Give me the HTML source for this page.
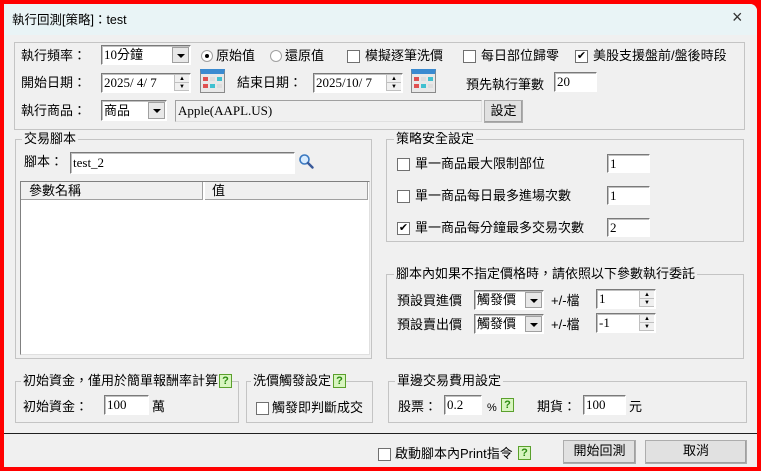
<!DOCTYPE html>
<html><head><meta charset="utf-8"><style>
*{box-sizing:border-box;margin:0;padding:0}
body{width:761px;height:471px;background:#ff0000;position:relative;overflow:hidden;font-family:"Liberation Sans","Noto Sans CJK TC",sans-serif;font-size:13px;color:#000}
.win{position:absolute;left:4px;top:4px;width:753px;height:463px;background:#f0f0f0;border-top-right-radius:7px;overflow:hidden}
.title{position:absolute;left:0;top:0;width:753px;height:31px;background:#e9f4f6}
.a{position:absolute;white-space:nowrap;line-height:16px}
.g{position:absolute;border:1px solid #c4c4c4}
.gt{position:absolute;background:#f0f0f0;padding:0 2px;line-height:14px;white-space:nowrap}
.in{position:absolute;background:#fff;border:1px solid;border-color:#7a7a7a #fff #fff #7a7a7a;box-shadow:inset 1px 1px 0 #c0c0c0;font-family:"Liberation Serif","Noto Sans CJK TC",serif;font-size:13px;line-height:17px;padding-left:2px;white-space:nowrap;overflow:hidden}
.cb{position:absolute;width:13px;height:13px;background:#fff;border:1px solid #707070;font-size:11px;line-height:11px;text-align:center}
.rd{position:absolute;width:12px;height:12px;border-radius:50%;background:#fff;border:1px solid #a0a0a0}
.rd.on::after{content:"";position:absolute;left:3px;top:3px;width:4px;height:4px;border-radius:50%;background:#000}
.dd{position:absolute;right:1px;top:1px;width:17px;bottom:1px;background:#e8e8e8;border:1px solid #a0a0a0}
.dd::after{content:"";position:absolute;left:4px;top:6px;border-left:4px solid transparent;border-right:4px solid transparent;border-top:4px solid #000}
.sp{position:absolute;right:1px;top:1px;width:15px;bottom:1px;background:#f0f0f0;border-left:1px solid #c0c0c0}
.sp i{position:absolute;left:0;width:14px;height:50%;border-bottom:1px solid #c0c0c0;font-style:normal;font-size:6px;text-align:center;line-height:8px}
.btn{position:absolute;background:#e1e1e1;border:1px solid #adadad;text-align:center;line-height:20px;box-shadow:inset -1px -1px 0 #a0a0a0}
.hp{position:absolute;width:13px;height:14px;border:1px solid #5aa02c;background:#d8f5c0;color:#2a8a10;font-size:11px;font-weight:bold;text-align:center;line-height:12px}
.cal{position:absolute;width:25px;height:24px;background:#e8e8e8;border:1px solid #8a8a8a;border-top:5px solid #3a8ad0}
.cal i{position:absolute;width:5px;height:4px;background:#ddd}
</style></head><body>
<div class="win">
<div class="title"></div>
<div class="a" style="left:8px;top:8px;font-size:12.5px">執行回測[策略]：test</div>
<div class="a" style="left:728px;top:5px;font-size:18px;color:#333">×</div>

<div class="g" style="left:10px;top:38px;width:731px;height:88px"></div>
<div class="a" style="left:17px;top:44px">執行頻率：</div>
<div class="in" style="left:97px;top:41px;width:90px;height:20px">10分鐘<div class="dd"></div></div>
<div class="rd on" style="left:197px;top:46px"></div><div class="a" style="left:212px;top:44px">原始值</div>
<div class="rd" style="left:266px;top:46px"></div><div class="a" style="left:281px;top:44px">還原值</div>
<div class="cb" style="left:343px;top:46px"></div><div class="a" style="left:361px;top:44px">模擬逐筆洗價</div>
<div class="cb" style="left:459px;top:46px"></div><div class="a" style="left:477px;top:44px">每日部位歸零</div>
<div class="cb" style="left:571px;top:46px">✔</div><div class="a" style="left:589px;top:44px">美股支援盤前/盤後時段</div>

<div class="a" style="left:17px;top:71px">開始日期：</div>
<div class="in" style="left:97px;top:69px;width:90px;height:20px">2025/ 4/ 7<div class="sp"><i style="top:0">▲</i><i style="top:50%">▼</i></div></div>
<div class="cal" style="left:196px;top:65px"><i style="left:2px;top:3px;background:#e05050"></i><i style="left:9px;top:3px"></i><i style="left:16px;top:3px;background:#40c0d0"></i><i style="left:2px;top:10px;background:#e05050"></i><i style="left:9px;top:10px;background:#40c0d0"></i><i style="left:16px;top:10px"></i></div>
<div class="a" style="left:233px;top:71px">結束日期：</div>
<div class="in" style="left:309px;top:69px;width:90px;height:20px">2025/10/ 7<div class="sp"><i style="top:0">▲</i><i style="top:50%">▼</i></div></div>
<div class="cal" style="left:407px;top:65px"><i style="left:2px;top:3px;background:#e05050"></i><i style="left:9px;top:3px"></i><i style="left:16px;top:3px;background:#40c0d0"></i><i style="left:2px;top:10px;background:#e05050"></i><i style="left:9px;top:10px;background:#40c0d0"></i><i style="left:16px;top:10px"></i></div>
<div class="a" style="left:462px;top:73px">預先執行筆數</div>
<div class="in" style="left:550px;top:68px;width:43px;height:20px">20</div>

<div class="a" style="left:17px;top:99px">執行商品：</div>
<div class="in" style="left:97px;top:96px;width:66px;height:21px;line-height:19px">商品<div class="dd"></div></div>
<div class="in" style="left:171px;top:96px;width:307px;height:22px;background:#f0f0f0;box-shadow:none;border-color:#a0a0a0 #e0e0e0 #e0e0e0 #a0a0a0;line-height:19px">Apple(AAPL.US)</div>
<div class="btn" style="left:480px;top:96px;width:39px;height:23px">設定</div>

<div class="g" style="left:11px;top:135px;width:357px;height:220px"></div>
<div class="gt" style="left:18px;top:128px">交易腳本</div>
<div class="a" style="left:20px;top:150px">腳本：</div>
<div class="in" style="left:66px;top:148px;width:225px;height:22px;line-height:19px">test_2</div>
<svg style="position:absolute;left:294px;top:149px" width="16" height="16" viewBox="0 0 16 16"><circle cx="6.5" cy="6.5" r="4.5" fill="#d8ecff" stroke="#3a78c0" stroke-width="1.6"/><path d="M10 10 L14.5 14.5" stroke="#3a5a9a" stroke-width="2.4" stroke-linecap="round"/></svg>
<div style="position:absolute;left:16px;top:177px;width:350px;height:174px;background:#fff;border:1px solid;border-color:#808080 #e0e0e0 #e0e0e0 #808080"></div>
<div style="position:absolute;left:17px;top:178px;width:182px;height:18px;background:#f0f0f0;border-right:1px solid #a0a0a0;border-bottom:1px solid #a0a0a0"></div>
<div style="position:absolute;left:201px;top:178px;width:163px;height:18px;background:#f0f0f0;border-right:1px solid #a0a0a0;border-bottom:1px solid #a0a0a0"></div>
<div class="a" style="left:25px;top:179px">參數名稱</div>
<div class="a" style="left:208px;top:179px">值</div>

<div class="g" style="left:382px;top:135px;width:358px;height:103px"></div>
<div class="gt" style="left:390px;top:128px">策略安全設定</div>
<div class="cb" style="left:393px;top:154px"></div><div class="a" style="left:411px;top:152px">單一商品最大限制部位</div>
<div class="in" style="left:603px;top:150px;width:43px;height:19px">1</div>
<div class="cb" style="left:393px;top:186px"></div><div class="a" style="left:411px;top:184px">單一商品每日最多進場次數</div>
<div class="in" style="left:603px;top:182px;width:43px;height:19px">1</div>
<div class="cb" style="left:393px;top:218px">✔</div><div class="a" style="left:411px;top:216px">單一商品每分鐘最多交易次數</div>
<div class="in" style="left:603px;top:214px;width:43px;height:19px">2</div>

<div class="g" style="left:382px;top:270px;width:358px;height:85px"></div>
<div class="gt" style="left:390px;top:263px">腳本內如果不指定價格時，請依照以下參數執行委託</div>
<div class="a" style="left:393px;top:289px">預設買進價</div>
<div class="in" style="left:470px;top:286px;width:70px;height:20px;line-height:18px">觸發價<div class="dd"></div></div>
<div class="a" style="left:547px;top:289px">+/-檔</div>
<div class="in" style="left:592px;top:285px;width:60px;height:20px">1<div class="sp"><i style="top:0">▲</i><i style="top:50%">▼</i></div></div>
<div class="a" style="left:393px;top:313px">預設賣出價</div>
<div class="in" style="left:470px;top:310px;width:70px;height:20px;line-height:18px">觸發價<div class="dd"></div></div>
<div class="a" style="left:547px;top:313px">+/-檔</div>
<div class="in" style="left:592px;top:309px;width:60px;height:20px">-1<div class="sp"><i style="top:0">▲</i><i style="top:50%">▼</i></div></div>

<div class="g" style="left:11px;top:377px;width:224px;height:42px"></div>
<div class="gt" style="left:17px;top:370px">初始資金，僅用於簡單報酬率計算</div>
<div class="hp" style="left:215px;top:370px">?</div>
<div class="a" style="left:19px;top:395px">初始資金：</div>
<div class="in" style="left:100px;top:391px;width:45px;height:20px">100</div>
<div class="a" style="left:148px;top:395px">萬</div>

<div class="g" style="left:242px;top:377px;width:127px;height:42px"></div>
<div class="gt" style="left:247px;top:370px">洗價觸發設定</div>
<div class="hp" style="left:329px;top:370px">?</div>
<div class="cb" style="left:252px;top:398px"></div><div class="a" style="left:268px;top:396px">觸發即判斷成交</div>

<div class="g" style="left:384px;top:377px;width:359px;height:42px"></div>
<div class="gt" style="left:391px;top:370px">單邊交易費用設定</div>
<div class="a" style="left:394px;top:395px">股票：</div>
<div class="in" style="left:440px;top:391px;width:38px;height:20px">0.2</div>
<div class="a" style="left:483px;top:396px;font-size:11px">%</div>
<div class="hp" style="left:497px;top:394px">?</div>
<div class="a" style="left:533px;top:395px">期貨：</div>
<div class="in" style="left:579px;top:391px;width:43px;height:20px">100</div>
<div class="a" style="left:625px;top:395px">元</div>

<div style="position:absolute;left:0;top:429px;width:753px;height:1px;background:#202020"></div>
<div class="cb" style="left:374px;top:444px"></div><div class="a" style="left:391px;top:442px">啟動腳本內Print指令</div>
<div class="hp" style="left:514px;top:442px">?</div>
<div class="btn" style="left:559px;top:436px;width:73px;height:24px">開始回測</div>
<div class="btn" style="left:641px;top:436px;width:102px;height:24px">取消</div>
</div>
</body></html>
